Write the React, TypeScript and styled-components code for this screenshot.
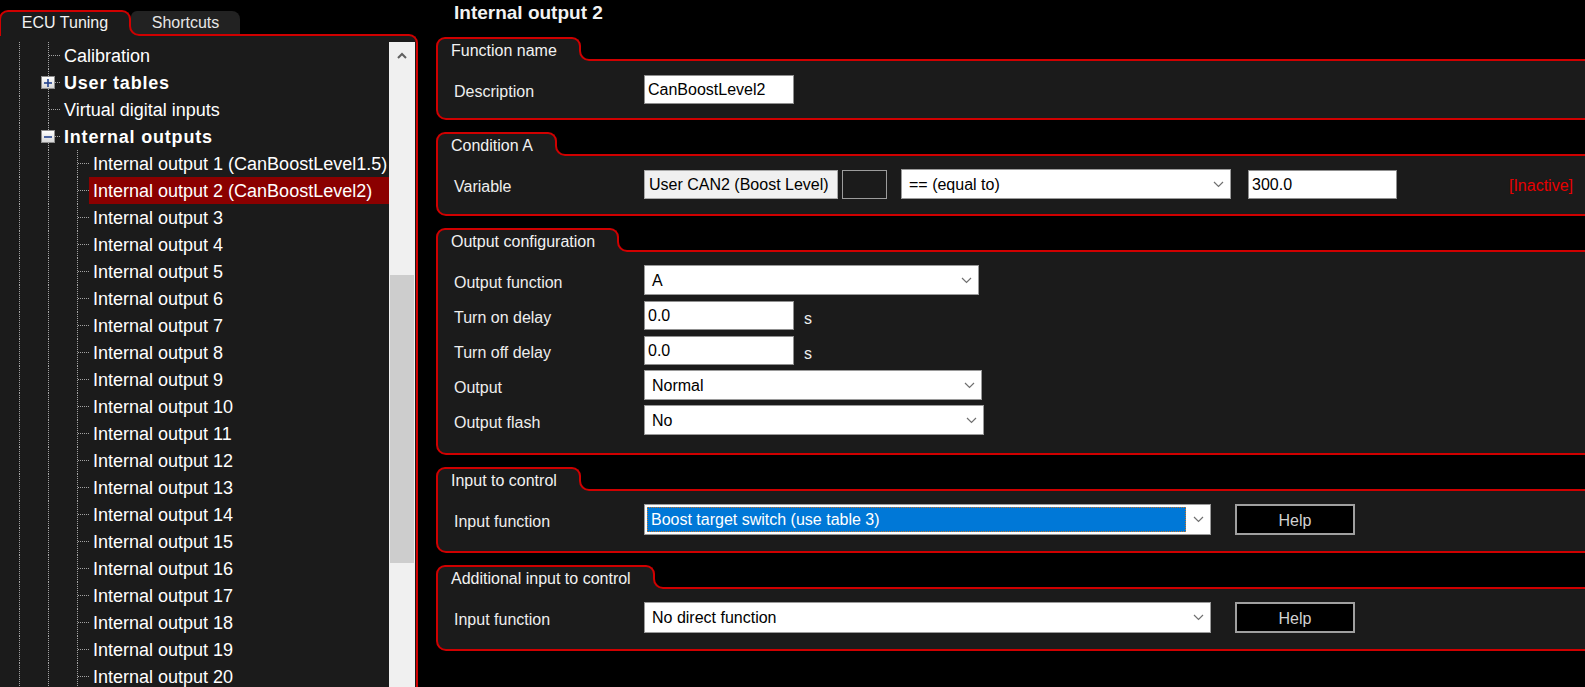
import React from 'react';
import styled, { createGlobalStyle, css } from 'styled-components';

const RED = '#d00000';
const PANEL = '#1b1b1b';

const GlobalStyle = createGlobalStyle`
  html, body { margin: 0; padding: 0; background: #000; }
  body {
    font-family: "Liberation Sans", Arial, sans-serif;
    color: #f2f2f2;
    overflow: hidden;
  }
  * { box-sizing: border-box; }
`;

const tabShape = css<{ $notch: string }>`
  position: relative;
  z-index: 1;
  border: 2px solid ${RED};
  border-bottom: 0;
  border-radius: 9px 9px 0 0;
  background: ${PANEL};
  &::before {
    content: '';
    position: absolute;
    left: 100%;
    bottom: 0;
    width: 12px;
    height: 12px;
    background: ${PANEL};
  }
  &::after {
    content: '';
    position: absolute;
    left: 100%;
    bottom: 0;
    width: 12px;
    height: 12px;
    border-left: 2px solid ${RED};
    border-bottom: 2px solid ${RED};
    border-bottom-left-radius: 10px;
    background: ${(p) => p.$notch};
  }
`;

const Screen = styled.div`
  display: flex;
  width: 100vw;
  height: 100vh;
  overflow: hidden;
  background: #000;
`;

/* ---------- left side ---------- */

const Sidebar = styled.aside`
  width: 418px;
  flex: none;
  display: flex;
  flex-direction: column;
`;

const TabStrip = styled.div`
  display: flex;
  align-items: flex-end;
  height: 36px;
  margin-bottom: -2px;
  position: relative;
  z-index: 2;
`;

const ActiveTab = styled.div<{ $notch: string }>`
  ${tabShape};
  margin-left: -1px;
  width: 132px;
  height: 26px;
  padding-bottom: 2px;
  display: flex;
  align-items: center;
  justify-content: center;
  font-size: 16px;
  color: #f2f2f2;
`;

const InactiveTab = styled.div`
  width: 109px;
  height: 23px;
  margin-bottom: 2px;
  background: #222;
  border-radius: 6px 8px 0 0;
  display: flex;
  align-items: center;
  justify-content: center;
  font-size: 16px;
  color: #e6e6e6;
`;

const TreePanel = styled.div`
  flex: 1;
  min-height: 0;
  margin-left: -2px;
  display: flex;
  border: 2px solid ${RED};
  border-bottom: 0;
  border-radius: 0 9px 0 0;
  background: ${PANEL};
  padding-top: 6px;
`;

const Tree = styled.ul`
  list-style: none;
  margin: 0;
  padding: 0;
  flex: 1;
  min-width: 0;
  overflow: hidden;
  font-size: 18px;
`;

const TreeRow = styled.li`
  display: flex;
  height: 27px;
  align-items: stretch;
`;

const Guide = styled.span`
  width: 29px;
  flex: none;
  position: relative;
  &::before {
    content: '';
    position: absolute;
    left: 19px;
    top: 0;
    bottom: 0;
    border-left: 1px dotted #a3a3a3;
  }
`;

const Connector = styled(Guide)`
  width: 31px;
  &::after {
    content: '';
    position: absolute;
    left: 20px;
    right: 0;
    top: 13px;
    border-top: 1px dotted #a3a3a3;
  }
`;

const Expander = styled.span`
  position: absolute;
  z-index: 1;
  left: 12px;
  top: 7px;
  width: 14px;
  height: 13px;
  border: 1px solid #8e8e8e;
  background: linear-gradient(#ffffff, #d8d8d8);
  display: flex;
  align-items: center;
  justify-content: center;
`;

const NodeLabel = styled.span<{ $bold?: boolean; $selected?: boolean }>`
  padding: 1px 17px 0 4px;
  line-height: 26px;
  white-space: nowrap;
  color: #fff;
  font-weight: ${(p) => (p.$bold ? 700 : 400)};
  letter-spacing: ${(p) => (p.$bold ? '0.8px' : '0')};
  background: ${(p) => (p.$selected ? '#8b0000' : 'transparent')};
`;

const ScrollTrack = styled.div`
  width: 26px;
  flex: none;
  margin-right: 1px;
  background: #f0f0f0;
  display: flex;
  flex-direction: column;
`;

const ScrollButton = styled.div`
  height: 27px;
  display: flex;
  align-items: center;
  justify-content: center;
`;

const ScrollThumb = styled.div`
  margin: 206px 1px 0;
  height: 288px;
  background: #cdcdcd;
`;

/* ---------- right side ---------- */

const Main = styled.main`
  flex: 1;
  min-width: 0;
  margin-right: -6px;
  padding-left: 18px;
  display: flex;
  flex-direction: column;
`;

const Title = styled.h1`
  margin: 0 0 11px 18px;
  height: 26px;
  font-size: 19px;
  line-height: 26px;
  font-weight: 700;
  color: #f2f2f2;
`;

const Group = styled.section`
  display: flex;
  flex-direction: column;
  margin-bottom: 12px;
`;

const GroupTab = styled.div<{ $notch: string }>`
  ${tabShape};
  align-self: flex-start;
  height: 24px;
  margin-bottom: -2px;
  padding: 1px 22px 0 13px;
  font-size: 16px;
  line-height: 21px;
  color: #f2f2f2;
`;

const GroupBody = styled.div<{ $pb: number }>`
  border: 2px solid ${RED};
  border-radius: 0 0 0 10px;
  background: ${PANEL};
  padding: 13px 16px ${(p) => p.$pb}px 16px;
  display: flex;
  flex-direction: column;
  gap: 5px;
`;

const FieldRow = styled.div<{ $h?: number }>`
  display: flex;
  align-items: center;
  height: ${(p) => p.$h ?? 30}px;
  font-size: 16px;
`;

const Label = styled.span`
  width: 190px;
  flex: none;
  padding-top: 5px;
  color: #eeeeee;
`;

const TextBox = styled.div<{ $w: number; $gap?: number }>`
  width: ${(p) => p.$w}px;
  height: 29px;
  margin-left: ${(p) => p.$gap ?? 0}px;
  flex: none;
  background: #fff;
  border: 1px solid #8f8f8f;
  color: #000;
  line-height: 27px;
  padding-left: 3px;
  white-space: nowrap;
`;

const ReadBox = styled(TextBox)`
  background: #f0f0f0;
  border-color: #a8a8a8;
  padding-left: 4px;
`;

const Swatch = styled.div`
  width: 45px;
  height: 29px;
  margin-left: 4px;
  flex: none;
  background: ${PANEL};
  border: 1px solid #9c9c9c;
`;

const SelectBox = styled.div<{ $w: number; $gap?: number }>`
  width: ${(p) => p.$w}px;
  height: 100%;
  margin-left: ${(p) => p.$gap ?? 0}px;
  flex: none;
  display: flex;
  align-items: stretch;
  background: #fff;
  border: 1px solid #9a9a9a;
  color: #000;
`;

const SelectValue = styled.span<{ $selected?: boolean }>`
  flex: 1;
  min-width: 0;
  margin: 2px 0 2px 2px;
  padding-left: ${(p) => (p.$selected ? 4 : 5)}px;
  padding-top: 1px;
  display: flex;
  align-items: center;
  white-space: nowrap;
  ${(p) =>
    p.$selected &&
    css`
      background: #0078d7;
      color: #fff;
      outline: 1px dotted #c7762a;
      outline-offset: -1px;
    `}
`;

const ChevronSlot = styled.span`
  width: 24px;
  flex: none;
  display: flex;
  align-items: center;
  justify-content: center;
`;

const Unit = styled.span`
  margin-left: 10px;
  color: #eeeeee;
  padding-top: 7px;
`;

const Status = styled.span`
  margin-left: auto;
  padding-top: 3px;
  color: #e60000;
`;

const HelpButton = styled.button`
  width: 120px;
  height: 31px;
  margin-left: 24px;
  flex: none;
  background: #000;
  border: 2px solid #a0a0a0;
  color: #d2d2d2;
  font: inherit;
  font-size: 16px;
  padding: 3px 0 0;
`;

/* ---------- pieces ---------- */

function Chevron() {
  return (
    <svg width="11" height="7" viewBox="0 0 11 7">
      <path d="M1 1 L5.5 5.5 L10 1" fill="none" stroke="#707070" strokeWidth="1.2" />
    </svg>
  );
}

function Select({ w, value, gap, selected }: { w: number; value: string; gap?: number; selected?: boolean }) {
  return (
    <SelectBox $w={w} $gap={gap}>
      <SelectValue $selected={selected}>{value}</SelectValue>
      <ChevronSlot>
        <Chevron />
      </ChevronSlot>
    </SelectBox>
  );
}

type TreeNodeData = {
  label: string;
  level: 2 | 3;
  bold?: boolean;
  expander?: 'plus' | 'minus';
  selected?: boolean;
};

const nodes: TreeNodeData[] = [
  { label: 'Calibration', level: 2 },
  { label: 'User tables', level: 2, bold: true, expander: 'plus' },
  { label: 'Virtual digital inputs', level: 2 },
  { label: 'Internal outputs', level: 2, bold: true, expander: 'minus' },
  { label: 'Internal output 1 (CanBoostLevel1.5)', level: 3 },
  { label: 'Internal output 2 (CanBoostLevel2)', level: 3, selected: true },
  ...Array.from({ length: 18 }, (_, i) => ({ label: `Internal output ${i + 3}`, level: 3 as const })),
];

function ExpanderIcon({ kind }: { kind: 'plus' | 'minus' }) {
  return (
    <svg width="8" height="8" viewBox="0 0 8 8">
      <path d="M0 4 H8" stroke="#23438f" strokeWidth="1.6" />
      {kind === 'plus' && <path d="M4 0 V8" stroke="#23438f" strokeWidth="1.6" />}
    </svg>
  );
}

function TreeNode({ node }: { node: TreeNodeData }) {
  const guides = Array.from({ length: node.level - 1 });
  return (
    <TreeRow>
      {guides.map((_, i) => (
        <Guide key={i} />
      ))}
      <Connector>
        {node.expander && (
          <Expander>
            <ExpanderIcon kind={node.expander} />
          </Expander>
        )}
      </Connector>
      <NodeLabel $bold={node.bold} $selected={node.selected}>
        {node.label}
      </NodeLabel>
    </TreeRow>
  );
}

export default function App() {
  return (
    <>
      <GlobalStyle />
      <Screen>
        <Sidebar>
          <TabStrip>
            <ActiveTab $notch="#222">ECU Tuning</ActiveTab>
            <InactiveTab>Shortcuts</InactiveTab>
          </TabStrip>
          <TreePanel>
            <Tree>
              {nodes.map((n) => (
                <TreeNode key={n.label} node={n} />
              ))}
            </Tree>
            <ScrollTrack>
              <ScrollButton>
                <svg width="10" height="7" viewBox="0 0 10 7">
                  <path d="M1 6 L5 2 L9 6" fill="none" stroke="#606060" strokeWidth="2" />
                </svg>
              </ScrollButton>
              <ScrollThumb />
            </ScrollTrack>
          </TreePanel>
        </Sidebar>

        <Main>
          <Title>Internal output 2</Title>

          <Group>
            <GroupTab $notch="#000">Function name</GroupTab>
            <GroupBody $pb={14}>
              <FieldRow>
                <Label>Description</Label>
                <TextBox $w={150}>CanBoostLevel2</TextBox>
              </FieldRow>
            </GroupBody>
          </Group>

          <Group>
            <GroupTab $notch="#000">Condition A</GroupTab>
            <GroupBody $pb={15}>
              <FieldRow>
                <Label>Variable</Label>
                <ReadBox $w={194}>User CAN2 (Boost Level)</ReadBox>
                <Swatch />
                <Select w={330} gap={14} value="== (equal to)" />
                <TextBox $w={149} $gap={17}>300.0</TextBox>
                <Status>[Inactive]</Status>
              </FieldRow>
            </GroupBody>
          </Group>

          <Group>
            <GroupTab $notch="#000">Output configuration</GroupTab>
            <GroupBody $pb={18}>
              <FieldRow>
                <Label>Output function</Label>
                <Select w={335} value="A" />
              </FieldRow>
              <FieldRow>
                <Label>Turn on delay</Label>
                <TextBox $w={150}>0.0</TextBox>
                <Unit>s</Unit>
              </FieldRow>
              <FieldRow>
                <Label>Turn off delay</Label>
                <TextBox $w={150}>0.0</TextBox>
                <Unit>s</Unit>
              </FieldRow>
              <FieldRow>
                <Label>Output</Label>
                <Select w={338} value="Normal" />
              </FieldRow>
              <FieldRow>
                <Label>Output flash</Label>
                <Select w={340} value="No" />
              </FieldRow>
            </GroupBody>
          </Group>

          <Group>
            <GroupTab $notch="#000">Input to control</GroupTab>
            <GroupBody $pb={16}>
              <FieldRow $h={31}>
                <Label>Input function</Label>
                <Select w={567} value="Boost target switch (use table 3)" selected />
                <HelpButton>Help</HelpButton>
              </FieldRow>
            </GroupBody>
          </Group>

          <Group>
            <GroupTab $notch="#000">Additional input to control</GroupTab>
            <GroupBody $pb={16}>
              <FieldRow $h={31}>
                <Label>Input function</Label>
                <Select w={567} value="No direct function" />
                <HelpButton>Help</HelpButton>
              </FieldRow>
            </GroupBody>
          </Group>
        </Main>
      </Screen>
    </>
  );
}
